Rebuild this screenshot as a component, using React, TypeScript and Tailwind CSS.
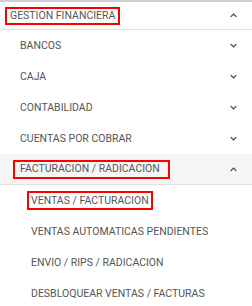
import React from "react";

function Chevron({ up }: { up?: boolean }) {
    return (
        <svg
            viewBox="0 0 10 6"
            className="w-[7px] h-[5px] text-[#444]"
            fill="none"
            stroke="currentColor"
            strokeWidth="1.8"
        >
            {up ? <path d="M1 5l4-4 4 4" /> : <path d="M1 1l4 4 4-4" />}
        </svg>
    );
}

const subItems = ["BANCOS", "CAJA", "CONTABILIDAD", "CUENTAS POR COBRAR"];
const leafItems = [
    "VENTAS AUTOMATICAS PENDIENTES",
    "ENVIO / RIPS / RADICACION",
    "DESBLOQUEAR VENTAS / FACTURAS",
];

export default function App() {
    return (
        <div className="w-[252px] h-[306px] overflow-hidden bg-white border-t-2 border-[#d0d0d0] font-['Roboto',sans-serif] text-[10.5px] text-[#555]">
            <div className="flex items-center justify-between h-[28px] pl-[5px] pr-[15px] border-b border-[#e2e2e2]">
                <span className="border-2 border-[#f00] px-[3px] h-[18px] flex items-center">GESTION FINANCIERA</span>
                <Chevron up />
            </div>
            {subItems.map((s) => (
                <div key={s} className="flex items-center justify-between h-[31px] pl-[20px] pr-[15px]">
                    <span>{s}</span>
                    <Chevron />
                </div>
            ))}
            <div className="flex items-center justify-between h-[31px] pl-[13px] pr-[15px] bg-[#f5f5f5] border-b border-[#e2e2e2]">
                <span className="border-2 border-[#f00] pl-[5px] pr-[8px] h-[19px] flex items-center">FACTURACION / RADICACION</span>
                <Chevron up />
            </div>
            <div className="flex items-center h-[31px] pl-[27px]">
                <span className="border-2 border-[#f00] px-[2px] h-[19px] flex items-center">VENTAS / FACTURACION</span>
            </div>
            {leafItems.map((s) => (
                <div key={s} className="flex items-center h-[31px] pl-[31px]">
                    <span>{s}</span>
                </div>
            ))}
        </div>
    );
}
